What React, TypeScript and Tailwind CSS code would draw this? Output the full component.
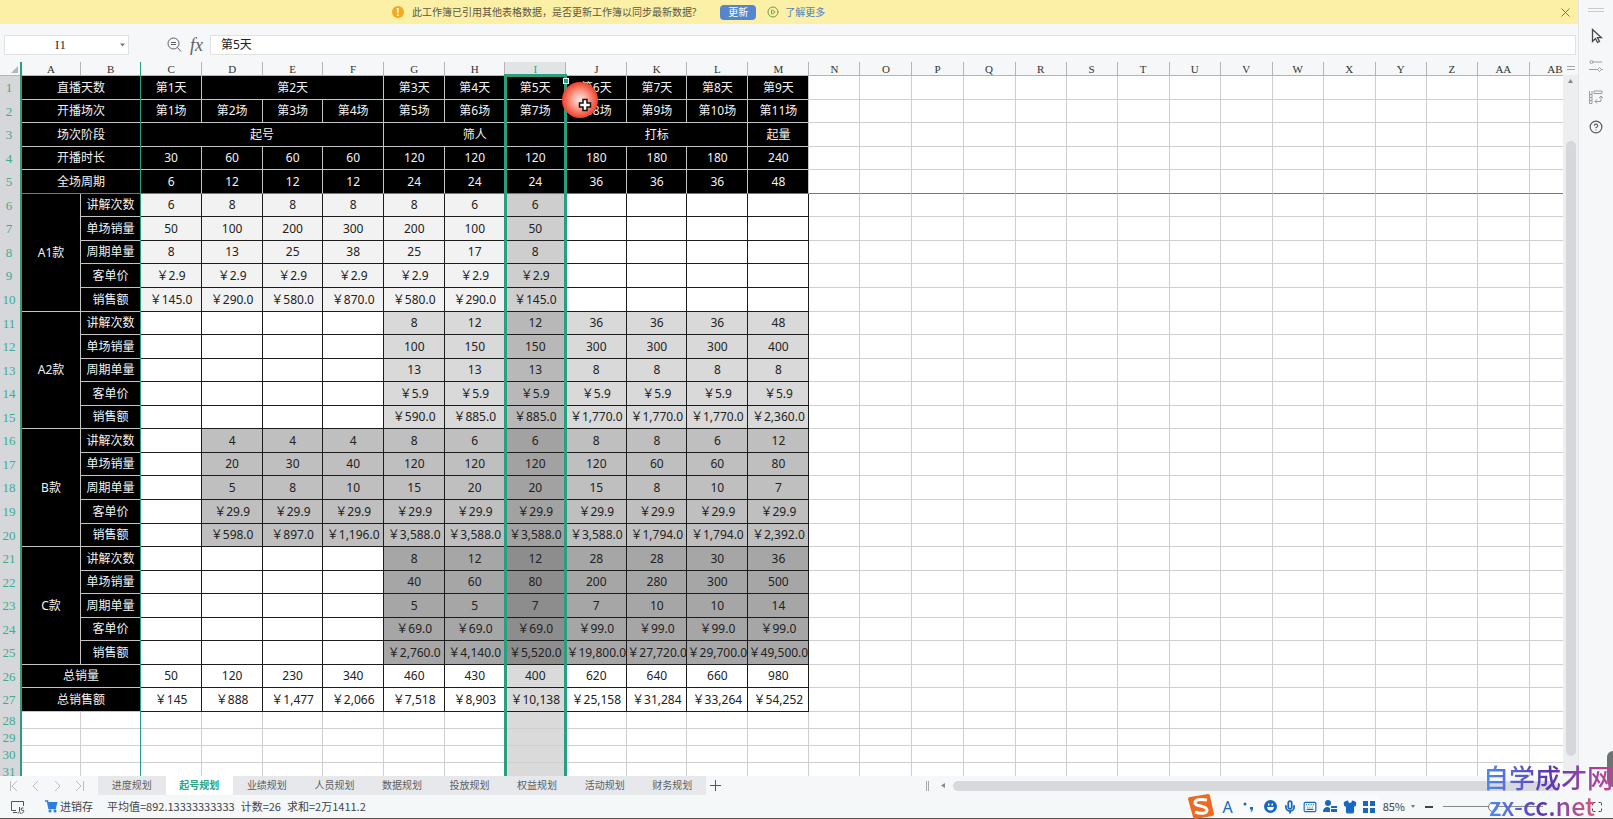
import React from "react";
import { Maximize, CirclePlay, Mic, Keyboard, Shirt, CircleHelp } from "lucide-react";

const columns = "A B C D E F G H I J K L M N O P Q R S T U V W X Y Z AA AB".split(" ");

function colWidth(i: number) {
  if (i === 0) return "w-[59px]";
  if (i === 1) return "w-[60px]";
  if (i < 13) return [2, 5, 8].includes(i - 2) ? "w-[60px]" : "w-[61px]";
  return [1, 3, 6].includes((i - 13) % 7) ? "w-[52px]" : "w-[51px]";
}

type Cell = { text: string; span?: number; rows?: number; tone: string };

const headRows: [string, number][][] = [
  [["直播天数", 2], ["第1天", 1], ["第2天", 3], ["第3天", 1], ["第4天", 1], ["第5天", 1], ["第6天", 1], ["第7天", 1], ["第8天", 1], ["第9天", 1]],
  [["开播场次", 2], ["第1场", 1], ["第2场", 1], ["第3场", 1], ["第4场", 1], ["第5场", 1], ["第6场", 1], ["第7场", 1], ["第8场", 1], ["第9场", 1], ["第10场", 1], ["第11场", 1]],
  [["场次阶段", 2], ["起号", 4], ["筛人", 3], ["打标", 3], ["起量", 1]],
  [["开播时长", 2], ["30", 1], ["60", 1], ["60", 1], ["60", 1], ["120", 1], ["120", 1], ["120", 1], ["180", 1], ["180", 1], ["180", 1], ["240", 1]],
  [["全场周期", 2], ["6", 1], ["12", 1], ["12", 1], ["12", 1], ["24", 1], ["24", 1], ["24", 1], ["36", 1], ["36", 1], ["36", 1], ["48", 1]],
];

const labels = ["讲解次数", "单场销量", "周期单量", "客单价", "销售额"];

// a dot stands for an empty cell
const groups = [
  {
    name: "A1款",
    tone: "bg-[#f2f2f2]",
    active: "bg-[#cecece]",
    rows: [
      "6 8 8 8 8 6 6 . . . .",
      "50 100 200 300 200 100 50 . . . .",
      "8 13 25 38 25 17 8 . . . .",
      "￥2.9 ￥2.9 ￥2.9 ￥2.9 ￥2.9 ￥2.9 ￥2.9 . . . .",
      "￥145.0 ￥290.0 ￥580.0 ￥870.0 ￥580.0 ￥290.0 ￥145.0 . . . .",
    ],
  },
  {
    name: "A2款",
    tone: "bg-[#d9d9d9]",
    active: "bg-[#b8b8b8]",
    rows: [
      ". . . . 8 12 12 36 36 36 48",
      ". . . . 100 150 150 300 300 300 400",
      ". . . . 13 13 13 8 8 8 8",
      ". . . . ￥5.9 ￥5.9 ￥5.9 ￥5.9 ￥5.9 ￥5.9 ￥5.9",
      ". . . . ￥590.0 ￥885.0 ￥885.0 ￥1,770.0 ￥1,770.0 ￥1,770.0 ￥2,360.0",
    ],
  },
  {
    name: "B款",
    tone: "bg-[#bfbfbf]",
    active: "bg-[#a2a2a2]",
    rows: [
      ". 4 4 4 8 6 6 8 8 6 12",
      ". 20 30 40 120 120 120 120 60 60 80",
      ". 5 8 10 15 20 20 15 8 10 7",
      ". ￥29.9 ￥29.9 ￥29.9 ￥29.9 ￥29.9 ￥29.9 ￥29.9 ￥29.9 ￥29.9 ￥29.9",
      ". ￥598.0 ￥897.0 ￥1,196.0 ￥3,588.0 ￥3,588.0 ￥3,588.0 ￥3,588.0 ￥1,794.0 ￥1,794.0 ￥2,392.0",
    ],
  },
  {
    name: "C款",
    tone: "bg-[#a6a6a6]",
    active: "bg-[#8d8d8d]",
    rows: [
      ". . . . 8 12 12 28 28 30 36",
      ". . . . 40 60 80 200 280 300 500",
      ". . . . 5 5 7 7 10 10 14",
      ". . . . ￥69.0 ￥69.0 ￥69.0 ￥99.0 ￥99.0 ￥99.0 ￥99.0",
      ". . . . ￥2,760.0 ￥4,140.0 ￥5,520.0 ￥19,800.0 ￥27,720.0 ￥29,700.0 ￥49,500.0",
    ],
  },
];

const totals = [
  ["总销量", "50 120 230 340 460 430 400 620 640 660 980"],
  ["总销售额", "￥145 ￥888 ￥1,477 ￥2,066 ￥7,518 ￥8,903 ￥10,138 ￥25,158 ￥31,284 ￥33,264 ￥54,252"],
];

const BLACK = "bg-black text-[#f2f2f2] border-[#c4c4c4]";

function buildRows(): Cell[][] {
  const rows: Cell[][] = headRows.map((r) =>
    r.map(([text, span]) => ({ text, span, tone: BLACK })),
  );
  groups.forEach((g) => {
    g.rows.forEach((line, i) => {
      const row: Cell[] = [];
      if (i === 0) row.push({ text: g.name, rows: 5, tone: BLACK });
      row.push({ text: labels[i], tone: BLACK });
      line.split(" ").forEach((v, c) => {
        const fill = v === "." ? "bg-white" : c === 6 ? g.active : g.tone;
        row.push({ text: v === "." ? "" : v, tone: fill + " text-[#222] border-[#1c1c1c]" });
      });
      rows.push(row);
    });
  });
  totals.forEach(([label, line]) => {
    rows.push([
      { text: label, span: 2, tone: BLACK },
      ...line.split(" ").map((text, c) => ({
        text,
        tone: (c === 6 ? "bg-[#dadada]" : "bg-white") + " text-[#222] border-[#1c1c1c]",
      })),
    ]);
  });
  return rows;
}

function Sheet() {
  const rows = buildRows();
  return (
    <div className="relative flex-1 min-w-0 overflow-hidden bg-white">
      <table className="table-fixed border-separate border-spacing-0 w-[1581px] text-xs text-center whitespace-nowrap">
        <colgroup>
          <col className="w-[22px]" />
          {columns.map((c, i) => (
            <col key={c} className={colWidth(i)} />
          ))}
        </colgroup>
        <thead>
          <tr className="h-3.5 font-['Liberation_Serif',serif] text-[11px] leading-3 text-[#333]">
            <th className="p-0 align-bottom bg-[#f5f7f8] border-b border-[#b5b5b9]">
              <svg className="ml-auto mr-1 mb-0.5" width="7" height="7" viewBox="0 0 7 7">
                <path d="M7 0v7H0z" fill="#b4b7ba" />
              </svg>
            </th>
            {columns.map((c) => (
              <th
                key={c}
                className={
                  "p-0 align-bottom font-normal border-r border-b border-[#b5b5b9] " +
                  (c === "I" ? "bg-[#e1e3e5] text-[#2aa583]" : "bg-[#f5f7f8]")
                }
              >
                {c}
              </th>
            ))}
          </tr>
        </thead>
        <tbody>
          {rows.map((row, r) => (
            <tr key={r} className={(r % 9) % 2 === 0 ? "h-6" : "h-[23px]"}>
              <RowHead n={r + 1} />
              {row.map((cell, i) => (
                <td
                  key={i}
                  colSpan={cell.span}
                  rowSpan={cell.rows}
                  className={
                    "p-0 leading-4 border-r border-b " +
                    cell.tone +
                    (r === 4 ? " border-b-[#2a9d7f]" : "")
                  }
                >
                  {cell.text}
                </td>
              ))}
              {columns.slice(13).map((c) => (
                <td
                  key={c}
                  className={
                    "p-0 border-r border-b border-[#cfcfd2] " +
                    (r === 4 ? "border-b-[#2a9d7f]" : "")
                  }
                />
              ))}
            </tr>
          ))}
          {[28, 29, 30, 31].map((n) => (
            <tr key={n} className="h-[17px]">
              <RowHead n={n} />
              {columns.map((c) => (
                <td
                  key={c}
                  className={
                    "p-0 border-r border-b border-[#cfcfd2] " + (c === "I" ? "bg-[#dadada]" : "")
                  }
                />
              ))}
            </tr>
          ))}
        </tbody>
      </table>
      {/* freeze line, header edge and the selected column */}
      <div className="absolute inset-y-0 left-5 w-0.5 bg-[#2a9d7f]" />
      <div className="absolute inset-y-0 left-[140px] w-px bg-[#2a9d7f]" />
      <div className="absolute top-3 -bottom-1 left-[504px] w-[63px] border-3 border-[#2a9f80]" />
      <div className="absolute top-4 left-[563px] size-1.5 border border-white bg-[#2a9f80]" />
      {/* click highlight with the cell cursor */}
      <div className="absolute top-5 left-[562px] size-9 rounded-full bg-[radial-gradient(circle,#ffe9e4_0%,#fb9c8b_35%,#f0402c_70%,#e82a18_100%)]">
        <svg className="absolute top-4 left-4" width="14" height="14" viewBox="0 0 14 14">
          <path
            d="M5 1.500h4v3.500h3.500v4H9v3.500H5V9H1.500V5H5z"
            fill="#fff"
            stroke="#111"
            strokeWidth="1.500"
          />
        </svg>
      </div>
    </div>
  );
}

function RowHead({ n }: { n: number }) {
  return (
    <th className="p-0 pr-1 bg-[#d5d7da] font-normal font-['Liberation_Serif',serif] text-[13px] leading-4 text-[#42ab8e]">
      {n}
    </th>
  );
}

function Notice() {
  return (
    <div className="relative flex items-center h-6 shrink-0 pl-[392px] bg-[#fcf0a6] text-[10px] text-[#5c5643]">
      <span className="flex items-center justify-center size-3 rounded-full bg-[#f0aa1c] text-white text-[10px] font-bold">
        !
      </span>
      <span className="ml-2">此工作簿已引用其他表格数据，是否更新工作簿以同步最新数据?</span>
      <button type="button" className="ml-6 w-9 h-[15px] rounded-sm bg-[#5585cf] text-white leading-[15px]">
        更新
      </button>
      <CirclePlay className="ml-[11px] size-3 text-[#6d9a4c]" />
      <a href="#" className="ml-1.5 text-[#4c83c4]">
        了解更多
      </a>
      <button type="button" aria-label="关闭" className="absolute right-2 top-2">
        <svg width="9" height="9" viewBox="0 0 9 9">
          <path d="M.5.5l8 8m0-8l-8 8" stroke="#7d744e" />
        </svg>
      </button>
    </div>
  );
}

function FormulaBar() {
  return (
    <div className="flex items-start h-[38px] shrink-0 pt-[11px] pl-1 pr-0.5">
      <div className="relative">
        <input
          aria-label="名称框"
          defaultValue="I1"
          className="block w-[125px] h-[20px] border border-[#dfe1e3] bg-white text-center pr-3 font-['Liberation_Serif',serif] text-[13px] text-[#333]"
        />
        <svg className="absolute right-1 top-2" width="5" height="4" viewBox="0 0 5 4">
          <path d="M0 .5h5L2.500 3.500z" fill="#777" />
        </svg>
      </div>
      <svg className="ml-[38px] mt-0.5" width="15" height="16" viewBox="0 0 15 16" fill="none" stroke="#5b5f63">
        <circle cx="6.500" cy="6.500" r="5.500" />
        <path d="M10.500 10.500l3.500 4M4 5.500h5M4 7.500h5" />
      </svg>
      <span className="ml-2 w-4 font-['Liberation_Serif',serif] italic text-lg leading-5 text-[#5b5f63]">fx</span>
      <input
        aria-label="编辑栏"
        defaultValue="第5天"
        className="ml-1 flex-1 h-[20px] border border-[#dfe1e3] bg-white pl-2.5 pb-0.5 text-xs text-[#222]"
      />
    </div>
  );
}

function ScrollBar() {
  return (
    <div className="flex flex-col items-center w-[15px] shrink-0 bg-[#eceef0]">
      <div className="w-full h-[13px] bg-[#f5f7f8] pt-1">
        <div className="mx-auto w-2 h-1 border-y border-[#a5a8ab]" />
      </div>
      <svg className="mt-1" width="5" height="4" viewBox="0 0 5 4">
        <path d="M0 4h5L2.500 0z" fill="#888" />
      </svg>
      <div className="mt-[58px] w-2.5 flex-1 rounded-full bg-[#d5d7da]" />
      <div className="h-5" />
    </div>
  );
}

function SideBar() {
  return (
    <aside className="flex flex-col items-center w-[35px] shrink-0 bg-[#f5f7f8] border-l border-[#e3e5e7] text-[#55595d]">
      <div className="mt-2 w-4 h-1 border-y border-[#c9cccf]" />
      <svg className="mt-4" width="13" height="16" viewBox="0 0 13 16" fill="none" stroke="#44484c" strokeWidth="1.300">
        <path d="M2.500 1.500v12l3-3 2 4 2-1-2-3.800h4z" />
      </svg>
      <svg className="mt-4" width="14" height="12" viewBox="0 0 14 12" fill="none" stroke="#9a9ea2">
        <circle cx="2.500" cy="2" r="1.500" />
        <path d="M4 2h9M0 9.500h8.500" />
        <path d="M10.500 7.500l2 2-2 2-2-2zM12.500 9.500H14" />
      </svg>
      <svg className="mt-[18px]" width="14" height="14" viewBox="0 0 14 14" fill="none" stroke="#9a9ea2">
        <path d="M.5 1v12.500h2.500V1M.5 4.500H3M.5 7.500H3M.5 10.500H3M5 1h8v2.500H5zM12 6v5.500H6M10 8l2-2 2 2M8 9.500l-2 2 2 2" />
      </svg>
      <CircleHelp className="mt-4 size-3.5" />
    </aside>
  );
}

const tabs = ["进度规划", "起号规划", "业绩规划", "人员规划", "数据规划", "投放规划", "权益规划", "活动规划", "财务规划"];

function SheetTabs() {
  return (
    <div className="flex h-[19px] shrink-0 bg-[#f5f7f8] text-[#5a5e66] text-[10px]">
      <svg className="ml-2 mt-1" width="78" height="12" viewBox="0 0 78 12" fill="none" stroke="#b9bcc0">
        <path d="M2.500 1v10M9 1L4 6l5 5M30 1l-5 5 5 5M47 1l5 5-5 5M68 1l5 5-5 5M75.500 1v10" />
      </svg>
      <nav className="grid grid-cols-9 ml-3 w-[608px] bg-[#e6e8eb]">
        {tabs.map((t, i) => (
          <button
            key={t}
            type="button"
            className={i === 1 ? "bg-white text-[#2aa583] font-bold" : ""}
          >
            {t}
          </button>
        ))}
      </nav>
      <button type="button" aria-label="新建工作表" className="ml-1">
        <svg width="11" height="11" viewBox="0 0 11 11">
          <path d="M5.500 0v11M0 5.500h11" stroke="#555" />
        </svg>
      </button>
      <div className="ml-auto flex items-center w-[687px]">
        <div className="w-[3px] h-2.5 border-x border-[#a5a8ab]" />
        <svg className="ml-3" width="4" height="5" viewBox="0 0 4 5">
          <path d="M4 0v5L0 2.500z" fill="#888" />
        </svg>
        <div className="ml-2 flex-1 h-2.5 rounded-full bg-[#d7d9dc]" />
        <div className="w-14" />
      </div>
    </div>
  );
}

function StatusBar() {
  return (
    <footer className="flex items-center h-6 shrink-0 bg-[#f4f8f8] border-b border-[#555] font-['Noto_Sans_CJK_SC',sans-serif] text-[11px] text-[#40444a]">
      <svg className="ml-2.5" width="15" height="14" viewBox="0 0 15 14" fill="none" stroke="#555">
        <path d="M6 10.500H1.500v-9h12V6M3 12.500h4M9.500 7v4.500q0 1.500-2 1.500M13.500 8q-2.500-.5-2.500 1t2 1.500-.5 2.500-2-.5" />
      </svg>
      <svg className="ml-5" width="13" height="13" viewBox="0 0 13 13">
        <path d="M0 1h2.500l1.500 7.500h7" fill="none" stroke="#2b7de0" strokeWidth="1.500" />
        <path d="M3 2h9.500l-1.500 6H4.500z" fill="#2b7de0" />
        <circle cx="5" cy="11" r="1.500" fill="#2b7de0" />
        <circle cx="10" cy="11" r="1.500" fill="#2b7de0" />
      </svg>
      <span className="ml-0.5">进销存</span>
      <span className="ml-3.5">平均值=892.13333333333</span>
      <span className="ml-1.5">计数=26</span>
      <span className="ml-1.5">求和=2万1411.2</span>
      <div className="ml-auto flex items-center h-full bg-[#f8fafc] text-[#1668c1]">
        <svg width="26" height="25" viewBox="0 0 26 25">
          <path d="M0 5q0-2 2-2l18-3q2 0 2 2l4 18q0 2-2 2L7 25q-2 0-2-2z" fill="#ee6a20" />
          <path d="M19 6q-12-2-12 3c0 4 12 2 12 7 0 4-7 4-12 2" fill="none" stroke="#fff" strokeWidth="3" />
        </svg>
        <span className="ml-2 font-['Noto_Sans',sans-serif] text-base">A</span>
        <svg className="ml-2.5" width="11" height="12" viewBox="0 0 11 12" fill="#1668c1">
          <circle cx="2" cy="3" r="1.500" />
          <path d="M7 6h3v2q0 2-2 3l-.5-1q1-.5 1-1.500H7z" />
        </svg>
        <svg className="ml-2.5" width="13" height="13" viewBox="0 0 13 13">
          <circle cx="6.500" cy="6.500" r="6.500" fill="#1668c1" />
          <path d="M3 7h7q-.5 3.500-3.500 3.500T3 7z" fill="#fff" />
          <path d="M4 3.500h1.500v2H4zM7.500 3.500H9v2H7.500z" fill="#fff" />
        </svg>
        <Mic className="ml-1.5 size-3.5" strokeWidth={3} />
        <Keyboard className="ml-1.5 size-3.5" />
        <svg className="ml-1.5" width="14" height="13" viewBox="0 0 14 13" fill="#1668c1">
          <circle cx="5" cy="3" r="3" />
          <path d="M0 12q0-5 5-5l2 1v4zM8 6h6v2H8zM8 9h6v3H8z" />
        </svg>
        <Shirt className="ml-1.5 size-3.5" fill="#1668c1" />
        <svg className="ml-1.5 mr-1" width="12" height="12" viewBox="0 0 12 12" fill="#1668c1">
          <path d="M0 0h5v5H0zM7 0h5v5H7zM0 7h5v5H0zM7 7h5v5H7z" />
        </svg>
      </div>
      <span className="ml-1">85%</span>
      <svg className="ml-1.5" width="4" height="3" viewBox="0 0 4 3">
        <path d="M0 0h4L2 3z" fill="#777" />
      </svg>
      <div className="ml-2.5 w-2 h-0.5 bg-[#444]" />
      <input
        type="range"
        aria-label="缩放"
        defaultValue={50}
        className="ml-2.5 w-[100px] h-px appearance-none bg-[#888] [&::-webkit-slider-thumb]:appearance-none [&::-webkit-slider-thumb]:size-2.5 [&::-webkit-slider-thumb]:rounded-full [&::-webkit-slider-thumb]:border [&::-webkit-slider-thumb]:border-[#777] [&::-webkit-slider-thumb]:bg-white"
      />
      <Maximize className="ml-12 mr-2.5 size-3" />
    </footer>
  );
}

export default function App() {
  return (
    <div className="relative flex flex-col h-screen overflow-hidden bg-[#f5f7f8] font-['Noto_Sans','Noto_Sans_CJK_SC',sans-serif]">
      <div className="flex flex-1 min-h-0">
        <div className="flex flex-col flex-1 min-w-0">
          <Notice />
          <FormulaBar />
          <div className="flex flex-1 min-h-0">
            <Sheet />
            <ScrollBar />
          </div>
        </div>
        <SideBar />
      </div>
      <SheetTabs />
      <StatusBar />
      <div className="absolute right-0 bottom-8 w-1.5 h-9 rounded-l-md bg-[#6f7275]" />
      <div className="absolute right-0 bottom-0 flex flex-col w-[130px] pointer-events-none font-medium font-['Noto_Sans_CJK_SC',sans-serif]">
        <span className="text-[26px] leading-7 whitespace-nowrap text-transparent bg-clip-text bg-linear-to-r from-[#4a8cf0] via-[#5a35b0] to-[#c0409a]">
          自学成才网
        </span>
        <span className="ml-1.5 w-fit text-[25px] leading-7 text-transparent bg-clip-text bg-linear-to-r from-[#4a8cf0] via-[#5a35b0] to-[#e0507f]">
          zx-cc.net
        </span>
      </div>
    </div>
  );
}
